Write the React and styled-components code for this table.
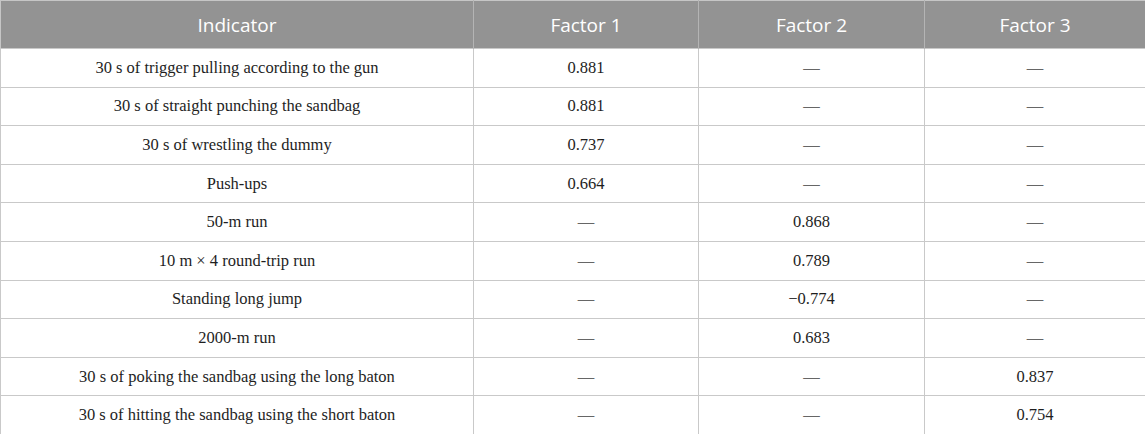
import React from "react";
import styled, { createGlobalStyle } from "styled-components";

const Global = createGlobalStyle`
  html, body { margin: 0; padding: 0; background: #ffffff; }
  #root { width: 1145px; }
`;

const Table = styled.table`
  width: 1145px;
  border-collapse: collapse;
  table-layout: fixed;
  border: 1px solid #c6c6c6;
`;

const Col = styled.col`
  width: ${(p) => p.$w}px;
`;

const HeadCell = styled.th`
  height: 48px;
  padding: 0;
  background: #939393;
  color: #ffffff;
  font-family: "Open Sans", "Liberation Sans", sans-serif;
  font-weight: 400;
  font-size: 19px;
  text-align: center;
  border-left: 1px solid #b4b4b4;
  box-sizing: border-box;
  &:first-child { border-left: none; }
`;

const Row = styled.tr`
  height: 38.6px;
`;

const Cell = styled.td`
  padding: 0;
  text-align: center;
  vertical-align: middle;
  font-family: "Liberation Serif", "Times New Roman", serif;
  font-size: 16.5px;
  color: ${(p) => (p.$dash ? "#666666" : "#1e1e1e")};
  border: 1px solid #c9c9c9;
`;

const widths = [473, 225, 226, 221];
const headers = ["Indicator", "Factor 1", "Factor 2", "Factor 3"];

const rows = [
  ["30 s of trigger pulling according to the gun", "0.881", "—", "—"],
  ["30 s of straight punching the sandbag", "0.881", "—", "—"],
  ["30 s of wrestling the dummy", "0.737", "—", "—"],
  ["Push-ups", "0.664", "—", "—"],
  ["50-m run", "—", "0.868", "—"],
  ["10 m × 4 round-trip run", "—", "0.789", "—"],
  ["Standing long jump", "—", "−0.774", "—"],
  ["2000-m run", "—", "0.683", "—"],
  ["30 s of poking the sandbag using the long baton", "—", "—", "0.837"],
  ["30 s of hitting the sandbag using the short baton", "—", "—", "0.754"],
];

export default function App() {
  return (
    <>
      <Global />
      <Table>
        <colgroup>
          {widths.map((w, i) => (
            <Col key={i} $w={w} />
          ))}
        </colgroup>
        <thead>
          <tr>
            {headers.map((h) => (
              <HeadCell key={h}>{h}</HeadCell>
            ))}
          </tr>
        </thead>
        <tbody>
          {rows.map((r, i) => (
            <Row key={i}>
              {r.map((c, j) => (
                <Cell key={j} $dash={c === "—"}>{c}</Cell>
              ))}
            </Row>
          ))}
        </tbody>
      </Table>
    </>
  );
}
